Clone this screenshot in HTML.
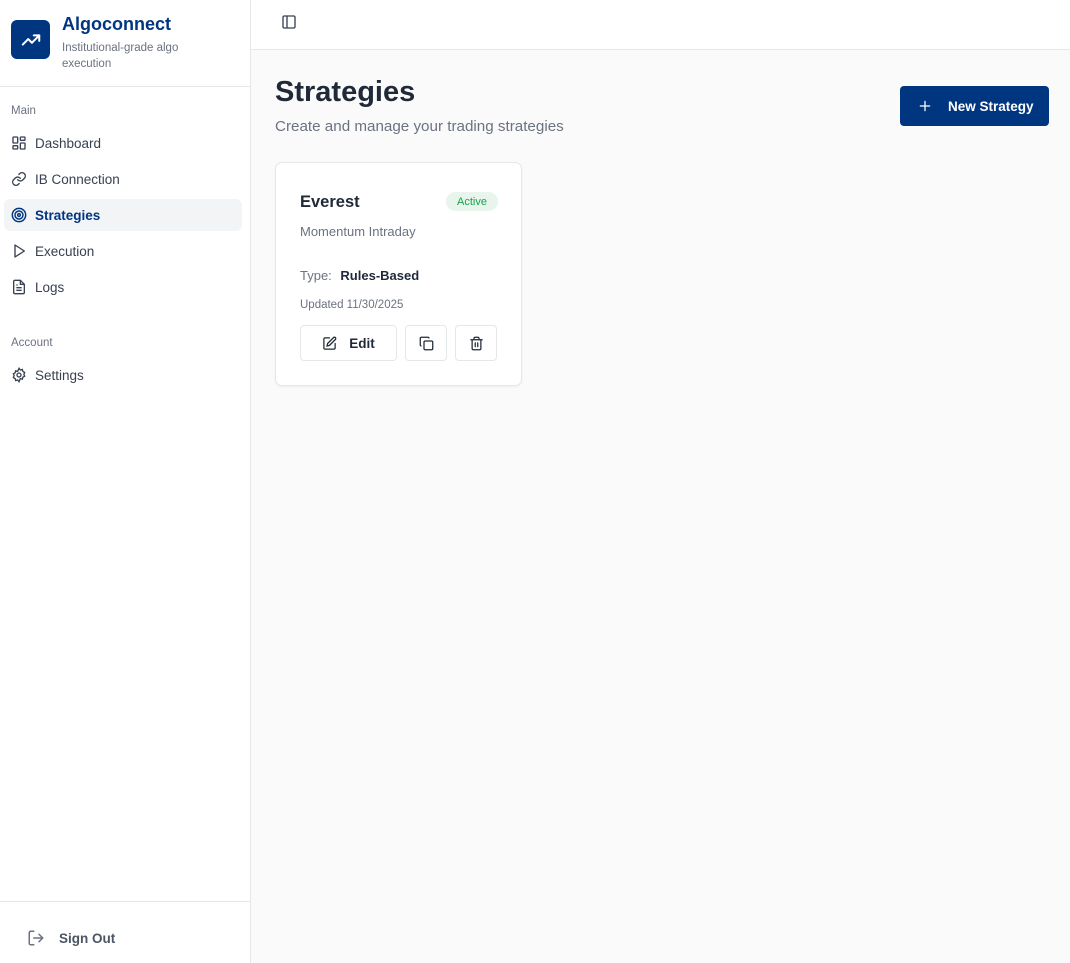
<!DOCTYPE html>
<html><head><meta charset="utf-8"><style>
*{box-sizing:border-box;margin:0;padding:0}
body{width:1070px;height:963px;font-family:"Liberation Sans",sans-serif;background:#fafafa;position:relative;overflow:hidden;color:#1f2937}
.sb{position:absolute;left:0;top:0;width:251px;height:963px;background:#fff;border-right:1px solid #e5e7eb}
.logo{position:absolute;left:11px;top:20px;width:39px;height:39px;background:#003580;border-radius:6px;display:flex;align-items:center;justify-content:center}
.brand{position:absolute;left:62px;top:14px;font-size:18px;font-weight:bold;color:#003580}
.tag{position:absolute;left:62px;top:40px;font-size:11.5px;color:#6b7280;line-height:16px;width:150px}
.hr1{position:absolute;left:0;top:86px;width:250px;border-top:1px solid #e5e7eb}
.sec{position:absolute;left:11px;font-size:11.5px;color:#6b7280}
.it{position:absolute;left:4px;width:238px;height:32px;display:flex;align-items:center;padding-left:7px;font-size:13.5px;color:#374151;border-radius:6px}
.it svg{margin-right:8px}
.it.on{background:#f3f4f6;color:#003580;font-weight:bold}
.hr2{position:absolute;left:0;top:901px;width:250px;border-top:1px solid #e5e7eb}
.so{position:absolute;left:27px;top:929px;display:flex;align-items:center;font-size:13.5px;color:#4b5563;font-weight:bold}
.hd{position:absolute;left:251px;top:0;right:0;height:50px;background:#fff;border-bottom:1px solid #e5e7eb}
h1{position:absolute;left:275px;top:76px;font-size:29px;font-weight:bold;color:#1f2937}
.sub{position:absolute;left:275px;top:118px;font-size:15.2px;color:#6b7280}
.btn{position:absolute;left:900px;top:86px;width:149px;height:40px;background:#003580;border-radius:4px;color:#fff;font-size:13.5px;font-weight:bold;display:flex;align-items:center;padding-left:18px}
.card{position:absolute;left:275px;top:162px;width:247px;height:224px;background:#fff;border:1px solid #e5e7eb;border-radius:7px;box-shadow:0 1px 2px rgba(0,0,0,.05)}
.t{position:absolute;left:24px;top:30px;font-size:16.5px;font-weight:bold;color:#1f2937}
.badge{position:absolute;left:170px;top:29px;width:52px;height:19px;background:#e8f5ec;border-radius:10px;color:#16a34a;font-size:11px;text-align:center;line-height:20px}
.m{position:absolute;left:24px;top:61px;font-size:13px;color:#6b7280}
.ty{position:absolute;left:24px;top:105px;font-size:13px;color:#6b7280}
.ty b{color:#1f2937;margin-left:5px}
.up{position:absolute;left:24px;top:136px;font-size:11.5px;color:#6b7280}
.b{position:absolute;top:162px;height:36px;border:1px solid #e5e7eb;border-radius:4px;display:flex;align-items:center;justify-content:center;font-size:13.5px;font-weight:bold;color:#1f2937;background:#fff}
</style></head><body>
<div class="sb">
<div class="logo"><svg width="22" height="22" viewBox="0 0 24 24" fill="none" stroke="#fff" stroke-width="2.2" stroke-linecap="round" stroke-linejoin="round"><path d="M3 17l6-6 4 4 8-8"/><path d="M15 7h6v6"/></svg></div>
<div class="brand">Algoconnect</div>
<div class="tag">Institutional-grade algo execution</div>
<div class="hr1"></div>
<div class="sec" style="top:105px">Main</div>
<div class="it" style="top:127px"><svg width="16" height="16" viewBox="0 0 24 24" fill="none" stroke="#374151" stroke-width="2"><rect x="3" y="3" width="7" height="9" rx="1"/><rect x="14" y="3" width="7" height="5" rx="1"/><rect x="14" y="12" width="7" height="9" rx="1"/><rect x="3" y="16" width="7" height="5" rx="1"/></svg>Dashboard</div>
<div class="it" style="top:163px"><svg width="16" height="16" viewBox="0 0 24 24" fill="none" stroke="#374151" stroke-width="2" stroke-linecap="round"><path d="M10 13a5 5 0 0 0 7.5.5l3-3a5 5 0 0 0-7-7l-1.7 1.7"/><path d="M14 11a5 5 0 0 0-7.5-.5l-3 3a5 5 0 0 0 7 7l1.7-1.7"/></svg>IB Connection</div>
<div class="it on" style="top:199px"><svg width="16" height="16" viewBox="0 0 24 24" fill="none" stroke="#003580" stroke-width="2.2"><circle cx="12" cy="12" r="10"/><circle cx="12" cy="12" r="6"/><circle cx="12" cy="12" r="2"/></svg>Strategies</div>
<div class="it" style="top:235px"><svg width="16" height="16" viewBox="0 0 24 24" fill="none" stroke="#374151" stroke-width="2" stroke-linejoin="round"><path d="M6 3l14 9-14 9z"/></svg>Execution</div>
<div class="it" style="top:271px"><svg width="16" height="16" viewBox="0 0 24 24" fill="none" stroke="#374151" stroke-width="2" stroke-linejoin="round"><path d="M14 2H6a2 2 0 0 0-2 2v16a2 2 0 0 0 2 2h12a2 2 0 0 0 2-2V8z"/><path d="M14 2v6h6M8 13h8M8 17h8M8 9h2"/></svg>Logs</div>
<div class="sec" style="top:337px">Account</div>
<div class="it" style="top:359px"><svg width="16" height="16" viewBox="0 0 24 24" fill="none" stroke="#374151" stroke-width="2"><circle cx="12" cy="12" r="3"/><path d="M12 2l2 2.5 3-.8.8 3 2.7 1.5-1.2 2.8 1.2 2.8-2.7 1.5-.8 3-3-.8L12 22l-2-2.5-3 .8-.8-3-2.7-1.5L4.7 13 3.5 10.2l2.7-1.5.8-3 3 .8z"/></svg>Settings</div>
<div class="hr2"></div>
<div class="so"><svg width="18" height="18" viewBox="0 0 24 24" fill="none" stroke="#6b7280" stroke-width="2" stroke-linecap="round" style="margin-right:14px"><path d="M9 21H5a2 2 0 0 1-2-2V5a2 2 0 0 1 2-2h4M16 17l5-5-5-5M21 12H9"/></svg>Sign Out</div>
</div>
<div class="hd"><svg style="position:absolute;left:30px;top:14px" width="16" height="16" viewBox="0 0 24 24" fill="none" stroke="#374151" stroke-width="2"><rect x="3" y="3" width="18" height="18" rx="2"/><path d="M9 3v18"/></svg></div>
<h1>Strategies</h1>
<div class="sub">Create and manage your trading strategies</div>
<div class="btn"><svg width="14" height="14" viewBox="0 0 24 24" fill="none" stroke="#fff" stroke-width="2.2" stroke-linecap="round" style="margin-right:16px"><path d="M12 4v16M4 12h16"/></svg>New Strategy</div>
<div class="card">
<div class="t">Everest</div><div class="badge">Active</div>
<div class="m">Momentum Intraday</div>
<div class="ty">Type: <b>Rules-Based</b></div>
<div class="up">Updated 11/30/2025</div>
<div class="b" style="left:24px;width:97px"><svg width="15" height="15" viewBox="0 0 24 24" fill="none" stroke="#1f2937" stroke-width="2" stroke-linecap="round" style="margin-right:12px"><path d="M12 3H5a2 2 0 0 0-2 2v14a2 2 0 0 0 2 2h14a2 2 0 0 0 2-2v-7"/><path d="M18.4 2.6a2.1 2.1 0 0 1 3 3L12 15l-4 1 1-4z"/></svg>Edit</div>
<div class="b" style="left:129px;width:42px"><svg width="15" height="15" viewBox="0 0 24 24" fill="none" stroke="#1f2937" stroke-width="2"><rect x="8" y="8" width="14" height="14" rx="2"/><path d="M4 16a2 2 0 0 1-2-2V4a2 2 0 0 1 2-2h10a2 2 0 0 1 2 2"/></svg></div>
<div class="b" style="left:179px;width:42px"><svg width="15" height="15" viewBox="0 0 24 24" fill="none" stroke="#1f2937" stroke-width="2" stroke-linecap="round"><path d="M3 6h18M19 6v14a2 2 0 0 1-2 2H7a2 2 0 0 1-2-2V6M8 6V4a2 2 0 0 1 2-2h4a2 2 0 0 1 2 2v2M10 11v6M14 11v6"/></svg></div>
</div>
</body></html>
